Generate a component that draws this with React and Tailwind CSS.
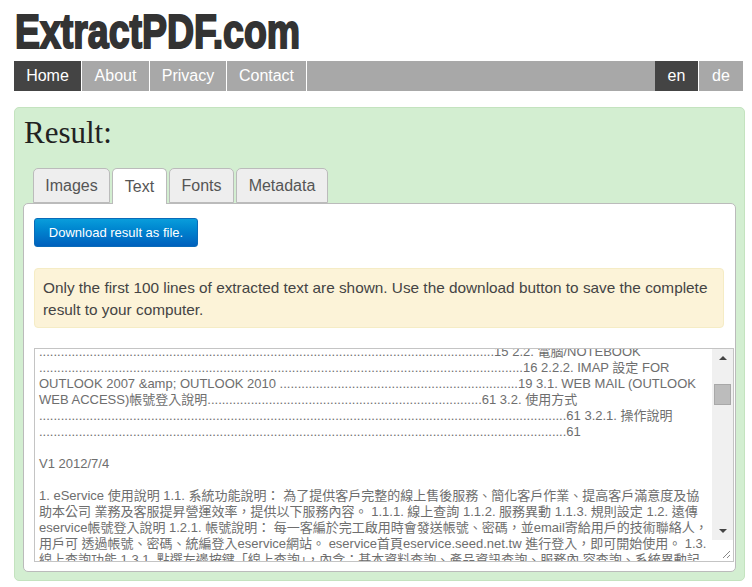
const dots = n => '.'.repeat(n)

const lines = [
  dots(126) + '15 2.2. 電腦/NOTEBOOK',
  dots(134) + '16 2.2.2. IMAP 設定 FOR',
  'OUTLOOK 2007 &amp; OUTLOOK 2010 ' + dots(66) + '19 3.1. WEB MAIL (OUTLOOK',
  'WEB ACCESS)帳號登入說明' + dots(76) + '61 3.2. 使用方式',
  dots(146) + '61 3.2.1. 操作說明',
  dots(146) + '61',
  '\u00a0',
  'V1 2012/7/4',
  '\u00a0',
  '1. eService 使用說明 1.1. 系統功能說明： 為了提供客戶完整的線上售後服務、簡化客戶作業、提高客戶滿意度及協',
  '助本公司 業務及客服提昇營運效率，提供以下服務內容。 1.1.1. 線上查詢 1.1.2. 服務異動 1.1.3. 規則設定 1.2. 遠傳',
  'eservice帳號登入說明 1.2.1. 帳號說明： 每一客編於完工啟用時會發送帳號、密碼，並email寄給用戶的技術聯絡人，',
  '用戶可 透過帳號、密碼、統編登入eservice網站。 eservice首頁eservice.seed.net.tw 進行登入，即可開始使用。 1.3.',
  '線上查詢功能 1.3.1. 點選左邊按鍵「線上查詢」，內含：基本資料查詢、產品資訊查詢、服務內 容查詢、系統異動記',
]

function NavItem({ active, className, children }) {
  return (
    <a className={`flex items-center justify-center h-full text-white text-[16px] ${active ? 'bg-[#444444]' : 'bg-[#a8a8a8]'} ${className}`}>
      {children}
    </a>
  )
}

function Tab({ active, className, children }) {
  return (
    <div className={`flex items-center justify-center rounded-t-[5px] border border-[#bbbbbb] text-[16px] text-[#555555] ${active ? 'h-[36px] -mb-px z-10 bg-white border-b-0' : 'h-[35px] bg-[#eeeeee]'} ${className}`}>
      {children}
    </div>
  )
}

export default function App() {
  return (
    <div className="w-[752px] h-[587px] overflow-hidden bg-white font-['Liberation_Sans','Noto_Sans_CJK_TC',sans-serif]">
      <div className="h-[61px] pl-[15px] pt-[8px]">
        <div className="inline-block origin-left scale-x-[0.78] font-bold text-[48px] leading-[48px] whitespace-nowrap text-[#333333] [-webkit-text-stroke:2px_#333333]">
          ExtractPDF.com
        </div>
      </div>

      <nav className="ml-[14px] w-[729px] h-[30px] flex bg-[#a8a8a8]">
        <NavItem active className="w-[67px]">Home</NavItem>
        <NavItem className="w-[68px] border-l border-white">About</NavItem>
        <NavItem className="w-[77px] border-l border-white">Privacy</NavItem>
        <NavItem className="w-[81px] border-x border-white">Contact</NavItem>
        <NavItem active className="w-[43px] ml-auto">en</NavItem>
        <NavItem className="w-[45px] border-l border-white">de</NavItem>
      </nav>

      <main className="ml-[14px] mt-[16px] w-[731px] h-[474px] rounded-[5px] border border-[#c4e3bf] bg-[#d3eed1] px-[8px]">
        <h1 className="font-['Liberation_Serif',serif] text-[31px] leading-[34px] mt-[8px] ml-px text-[#222222]">Result:</h1>

        <div className="flex gap-[2px] ml-[10px] mt-[18px] items-start">
          <Tab className="w-[77px]">Images</Tab>
          <Tab active className="w-[55px]">Text</Tab>
          <Tab className="w-[65px]">Fonts</Tab>
          <Tab className="w-[92px]">Metadata</Tab>
        </div>

        <section className="w-[713px] h-[369px] rounded-[5px] border border-[#bbbbbb] bg-white pl-[10px] pt-[14px]">
          <button className="block w-[164px] h-[29px] rounded-[3px] border border-[#0a6bb8] bg-gradient-to-b from-[#0a9ddb] to-[#0060bd] text-white text-[13px]">
            Download result as file.
          </button>

          <div className="w-[690px] h-[60px] mt-[21px] rounded-[4px] border border-[#f5ecc5] bg-[#fcf3d8] px-[8px] py-[8px] text-[15.35px] leading-[22px] text-[#444444]">
            Only the first 100 lines of extracted text are shown. Use the download button to save the complete result to your computer.
          </div>

          <div className="flex w-[700px] h-[214px] mt-[20px] border border-[#c4c4c4]">
            <div className="flex-1 overflow-hidden pl-[4px]">
              <div className="-mt-[5px] text-[13px] leading-[16px] text-[#6e6e6e]">
                {lines.map((line, i) => (
                  <div key={i} className="whitespace-nowrap">{line}</div>
                ))}
              </div>
            </div>
            <div className="w-[21px] flex flex-col bg-[#f0f0f0]">
              <div className="h-[18px] flex items-center justify-center">
                <div className="w-0 h-0 border-x-[4px] border-x-transparent border-b-[4px] border-b-[#444444]" />
              </div>
              <div className="h-[21px] w-[17px] mx-auto mt-[17px] border border-[#a8a8a8] bg-[#bcbcbc]" />
              <div className="mt-auto h-[18px] flex items-center justify-center mb-[16px]">
                <div className="w-0 h-0 border-x-[4px] border-x-transparent border-t-[4px] border-t-[#444444]" />
              </div>
              <div className="h-[21px] bg-white flex items-end justify-end p-[2px] -mt-[16px]">
                <svg width="9" height="9" viewBox="0 0 9 9" stroke="#888888" fill="none"><path d="M1 8 8 1M5 8 8 5" /></svg>
              </div>
            </div>
          </div>
        </section>
      </main>
    </div>
  )
}
